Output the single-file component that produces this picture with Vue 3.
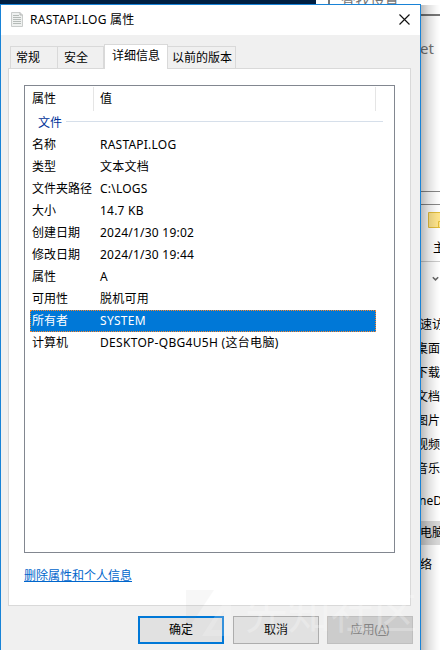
<script setup>
const tabs = [
  { label: '常规', cls: 'general' },
  { label: '安全', cls: 'security' },
  { label: '详细信息', cls: 'active' },
  { label: '以前的版本', cls: 'versions' },
]
const rows = [
  { name: '名称', value: 'RASTAPI.LOG' },
  { name: '类型', value: '文本文档' },
  { name: '文件夹路径', value: 'C:\\LOGS' },
  { name: '大小', value: '14.7 KB' },
  { name: '创建日期', value: '2024/1/30 19:02' },
  { name: '修改日期', value: '2024/1/30 19:44' },
  { name: '属性', value: 'A' },
  { name: '可用性', value: '脱机可用' },
  { name: '所有者', value: 'SYSTEM', selected: true, wide: true },
  { name: '计算机', value: 'DESKTOP-QBG4U5H (这台电脑)', wide: true },
]
const places = ['桌面', '下载', '文档', '图片', '视频', '音乐']
</script>

<template>
  <div class="desktop">
    <div class="settings">
      <div class="search">查找设置</div>
      <div class="net">et</div>
    </div>
    <div class="explorer">
      <div class="caption"></div>
      <div class="folder-row">
        <svg width="12" height="16" viewBox="0 0 12 16"><path d="M.5.5H14V15.5H.5z" fill="#ffe58c" stroke="#e3bd3b" /><path d="M10.5 15V9.5H12" fill="none" stroke="#e3bd3b" /></svg>
      </div>
      <div class="menu">主</div>
      <div class="nav"><svg width="7" height="6" viewBox="0 0 7 6"><path d="M.8 1.2 3.5 3.9 6.2 1.2" fill="none" stroke="#666" stroke-width="1.5" /></svg></div>
      <div class="tree">
        <div class="place quick">速访</div>
        <div v-for="p in places" :key="p" class="place">{{ p }}</div>
        <div class="place drive">neD</div>
        <div class="place pc">电脑</div>
        <div class="place network">络</div>
      </div>
    </div>
    <div class="shade"></div>

    <div class="dialog">
      <div class="title">
        <svg class="doc" width="12" height="15" viewBox="0 0 12 15">
          <path d="M.5.5H9L11.500 3V14.500H.5z" fill="#eff1f0" stroke="#c9cccb" />
          <path d="M9 .5V3H11.500" fill="#ddd" stroke="#b5b8b7" />
          <path d="M2 3.500H8M2 5.500H10M2 7.500H10M2 9.500H10M2 11.500H10" stroke="#b5bbb8" />
        </svg>
        <span class="title-text">RASTAPI.LOG 属性</span>
        <svg class="close" width="11" height="11" viewBox="0 0 11 11"><path d="M.5.5 10.500 10.500M10.500.5.5 10.500" stroke="#111" stroke-width="1.150" /></svg>
      </div>
      <div class="tabs">
        <div v-for="t in tabs" :key="t.label" class="tab" :class="t.cls">{{ t.label }}</div>
      </div>
      <div class="panel">
        <div class="list">
          <div class="head"><span class="h-name">属性</span><span class="h-value">值</span></div>
          <div class="group"><span>文件</span><i></i></div>
          <div v-for="r in rows" :key="r.name" class="row" :class="{ selected: r.selected }">
            <span class="name">{{ r.name }}</span><span class="value" :class="{ wide: r.wide }">{{ r.value }}</span>
          </div>
        </div>
        <a class="link">删除属性和个人信息</a>
      </div>
      <div class="buttons">
        <div class="btn primary">确定</div>
        <div class="btn">取消</div>
        <div class="btn disabled">应用(<u>A</u>)</div>
      </div>
    </div>
    <div class="watermark">
      <svg width="47" height="50" viewBox="0 0 47 50"><path d="M0 0H28L0 42z" fill="#999" opacity=".28" /><path d="M45 1V46H16z" fill="#fff" opacity=".75" /><path d="M38 20V40H25z" fill="#ddd" opacity=".6" /></svg>
      <span>先知社区</span>
    </div>
  </div>
</template>

<style>
body { overflow: hidden; }
</style>

<style scoped>
* { box-sizing: border-box; }
.desktop { position: relative; width: 440px; height: 650px; overflow: hidden; background: #fff; font: 12px/16px "Noto Sans", "Noto Sans CJK SC", sans-serif; color: #000; }
.settings { position: absolute; left: 0; top: 0; width: 440px; height: 192px; border-left: 316px solid #001f42; background: #fff; color: #767676; }
.search { width: 128px; height: 16px; margin-left: 12px; padding-left: 11px; border-left: 2px solid #777; border-bottom: 2px solid #777; font-size: 14.5px; line-height: 0; }
.net { margin: 22px 0 0 104px; font-size: 15px; line-height: 20px; }
.explorer { position: absolute; left: 420px; top: 191px; width: 30px; height: 459px; border-top: 1px solid #888; background: #fff; }
.caption { height: 13px; border-bottom: 1px solid #888; }
.folder-row { height: 31px; padding: 7px 0 0 8px; }
.folder-row svg, .nav svg { display: block; }
.menu { height: 26px; padding: 4px 0 0 13px; border-bottom: 1px solid #ccc; }
.nav { height: 51px; padding: 14px 0 0 12px; }
.place { height: 24px; margin-left: -4px; line-height: 24px; white-space: nowrap; }
.quick { margin-left: 0; }
.drive { margin: 8px 0 0 -1px; }
.pc { margin: 8px 0 0 0; background: #d9d9d9; }
.network { margin: 8px 0 0 0; }
.shade { position: absolute; left: 421px; top: 5px; width: 19px; height: 645px; background: linear-gradient(90deg, rgba(0,0,0,.27), rgba(0,0,0,.12) 40%, rgba(0,0,0,.03) 80%, transparent); }
.dialog { position: absolute; left: 0; top: 4px; width: 421px; height: 650px; border: 1px solid #1883d7; background: #f0f0f0; }
.title { height: 30px; display: flex; align-items: center; padding: 0 10px; background: #fff; }
.doc { margin-top: -2px; }
.title-text { margin-left: 7px; letter-spacing: .25px; }
.close { margin: -2px 0 0 auto; }
.tabs { height: 33px; display: flex; align-items: flex-end; padding-left: 9px; }
.tab { height: 22px; border: 1px solid #d9d9d9; border-bottom: 0; border-left: 0; padding: 3px 0 0 5px; white-space: nowrap; }
.general { width: 48px; border-left: 1px solid #d9d9d9; }
.security { width: 46px; padding-left: 6px; }
.active { height: 25px; width: 64px; padding-left: 7px; background: #fff; border-left: 1px solid #d9d9d9; margin-bottom: -1px; position: relative; z-index: 1; }
.versions { width: 68px; padding-left: 4px; }
.panel { width: 403px; height: 538px; margin-left: 7px; border: 1px solid #d9d9d9; background: #fff; padding: 16px 15px; }
.list { width: 371px; height: 468px; border: 1px solid #828790; padding: 1px 0 0 5px; }
.head { display: flex; width: 346px; height: 24px; line-height: 24px; border-right: 1px solid #e5e5e5; }
.h-name { width: 64px; padding-left: 2px; border-right: 1px solid #e5e5e5; }
.h-value { padding-left: 6px; }
.group { height: 23px; display: flex; align-items: center; color: #003399; padding-left: 8px; }
.group i { width: 317px; height: 1px; margin: -2px 0 0 4px; background: #d6dfea; }
.row { width: 346px; height: 22px; display: flex; align-items: center; padding-left: 2px; white-space: nowrap; }
.name { width: 68px; }
.value { letter-spacing: .22px; }
.value.wide { letter-spacing: .3px; }
.selected { background: #0078d7; color: #fff; outline: 1px dotted #ff8728; outline-offset: -1px; }
.link { display: block; width: max-content; margin-top: 15px; color: #0066cc; text-decoration: underline; text-underline-offset: 1px; }
.buttons { display: flex; gap: 9px; margin: 10px 0 0 137px; }
.btn { width: 86px; height: 28px; border: 1px solid #adadad; background: #e1e1e1; text-align: center; line-height: 26px; }
.primary { border: 2px solid #0078d7; line-height: 24px; }
.disabled { margin-left: -1px; background: #ccc; border-color: #bfbfbf; color: #838383; }
.watermark { position: absolute; left: 186px; top: 590px; display: flex; gap: 12px; opacity: .25; pointer-events: none; }
.watermark span { margin-top: -2px; font-size: 43px; line-height: 50px; color: #fff; white-space: nowrap; }
</style>
